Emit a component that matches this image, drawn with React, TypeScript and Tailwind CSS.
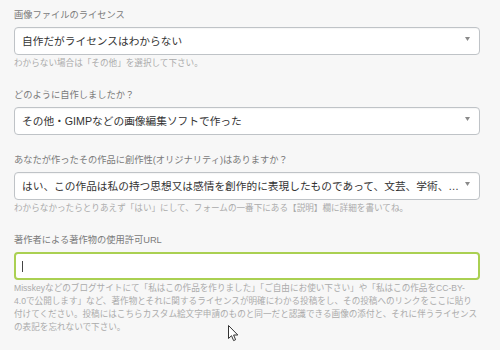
import React from 'react';

const font = { fontFamily: '"Liberation Sans", "Noto Sans CJK JP", sans-serif' };

function Arrow() {
  return (
    <svg className="absolute right-[9px] top-[9px]" width="5" height="4" viewBox="0 0 5 4">
      <path d="M0 0 H5 L2.5 4 Z" fill="#8a8a8a" />
    </svg>
  );
}

function SelectBox({ value }: { value: string }) {
  return (
    <div className="relative h-[28px] w-[466px] rounded-[4px] border border-[#bfc3c7] bg-white shadow-[inset_0_1px_1px_rgba(0,0,0,0.04)]">
      <div className="whitespace-nowrap pl-[7px] pr-[15px] text-[10.7px] leading-[26px] text-[#333]">{value}</div>
      <Arrow />
    </div>
  );
}

function Label({ children }: { children: React.ReactNode }) {
  return <div className="mb-[4px] text-[9.25px] leading-[16px] text-[#7a7a7a]">{children}</div>;
}

function Help({ children }: { children: React.ReactNode }) {
  return <div className="mt-[2px] text-[8.6px] leading-[13px] text-[#ababab]">{children}</div>;
}

export default function App() {
  return (
    <div className="relative h-[350px] w-[500px] overflow-hidden bg-[#f7f7f7]" style={font}>
      <div className="flex w-[480px] flex-col gap-[17px] pl-[14px] pt-[7px]">
        {/* license */}
        <div>
          <Label>画像ファイルのライセンス</Label>
          <SelectBox value="自作だがライセンスはわからない" />
          <Help>わからない場合は「その他」を選択して下さい。</Help>
        </div>

        {/* how it was made */}
        <div>
          <Label>どのように自作しましたか？</Label>
          <SelectBox value="その他・GIMPなどの画像編集ソフトで作った" />
        </div>

        {/* originality */}
        <div>
          <Label>あなたが作ったその作品に創作性(オリジナリティ)はありますか？</Label>
          <SelectBox value="はい、この作品は私の持つ思想又は感情を創作的に表現したものであって、文芸、学術、…" />
          <Help>わからなかったらとりあえず「はい」にして、フォームの一番下にある【説明】欄に詳細を書いてね。</Help>
        </div>

        {/* permission url */}
        <div>
          <Label>著作者による著作物の使用許可URL</Label>
          <div className="flex h-[28px] w-[466px] items-center rounded-[4px] border-2 border-[#aad052] bg-white pl-[6px]">
            <div className="h-[11px] w-px bg-[#444]" />
          </div>
          <Help>
            <div className="whitespace-nowrap">Misskeyなどのブログサイトにて「私はこの作品を作りました」「ご自由にお使い下さい」や「私はこの作品をCC-BY-</div>
            <div className="whitespace-nowrap">4.0で公開します」など、著作物とそれに関するライセンスが明確にわかる投稿をし、その投稿へのリンクをここに貼り</div>
            <div className="whitespace-nowrap">付けてください。投稿にはこちらカスタム絵文字申請のものと同一だと認識できる画像の添付と、それに伴うライセンス</div>
            <div className="whitespace-nowrap">の表記を忘れないで下さい。</div>
          </Help>
        </div>
      </div>

      {/* mouse cursor */}
      <svg className="absolute left-[228px] top-[325px]" width="11" height="17" viewBox="0 0 11 17">
        <path d="M0.5 0.5 V13.5 L3.5 10.7 L5.6 15.6 L7.6 14.7 L5.6 10 H9.8 Z" fill="#fff" stroke="#333" strokeWidth="1" strokeLinejoin="round" />
      </svg>
    </div>
  );
}
